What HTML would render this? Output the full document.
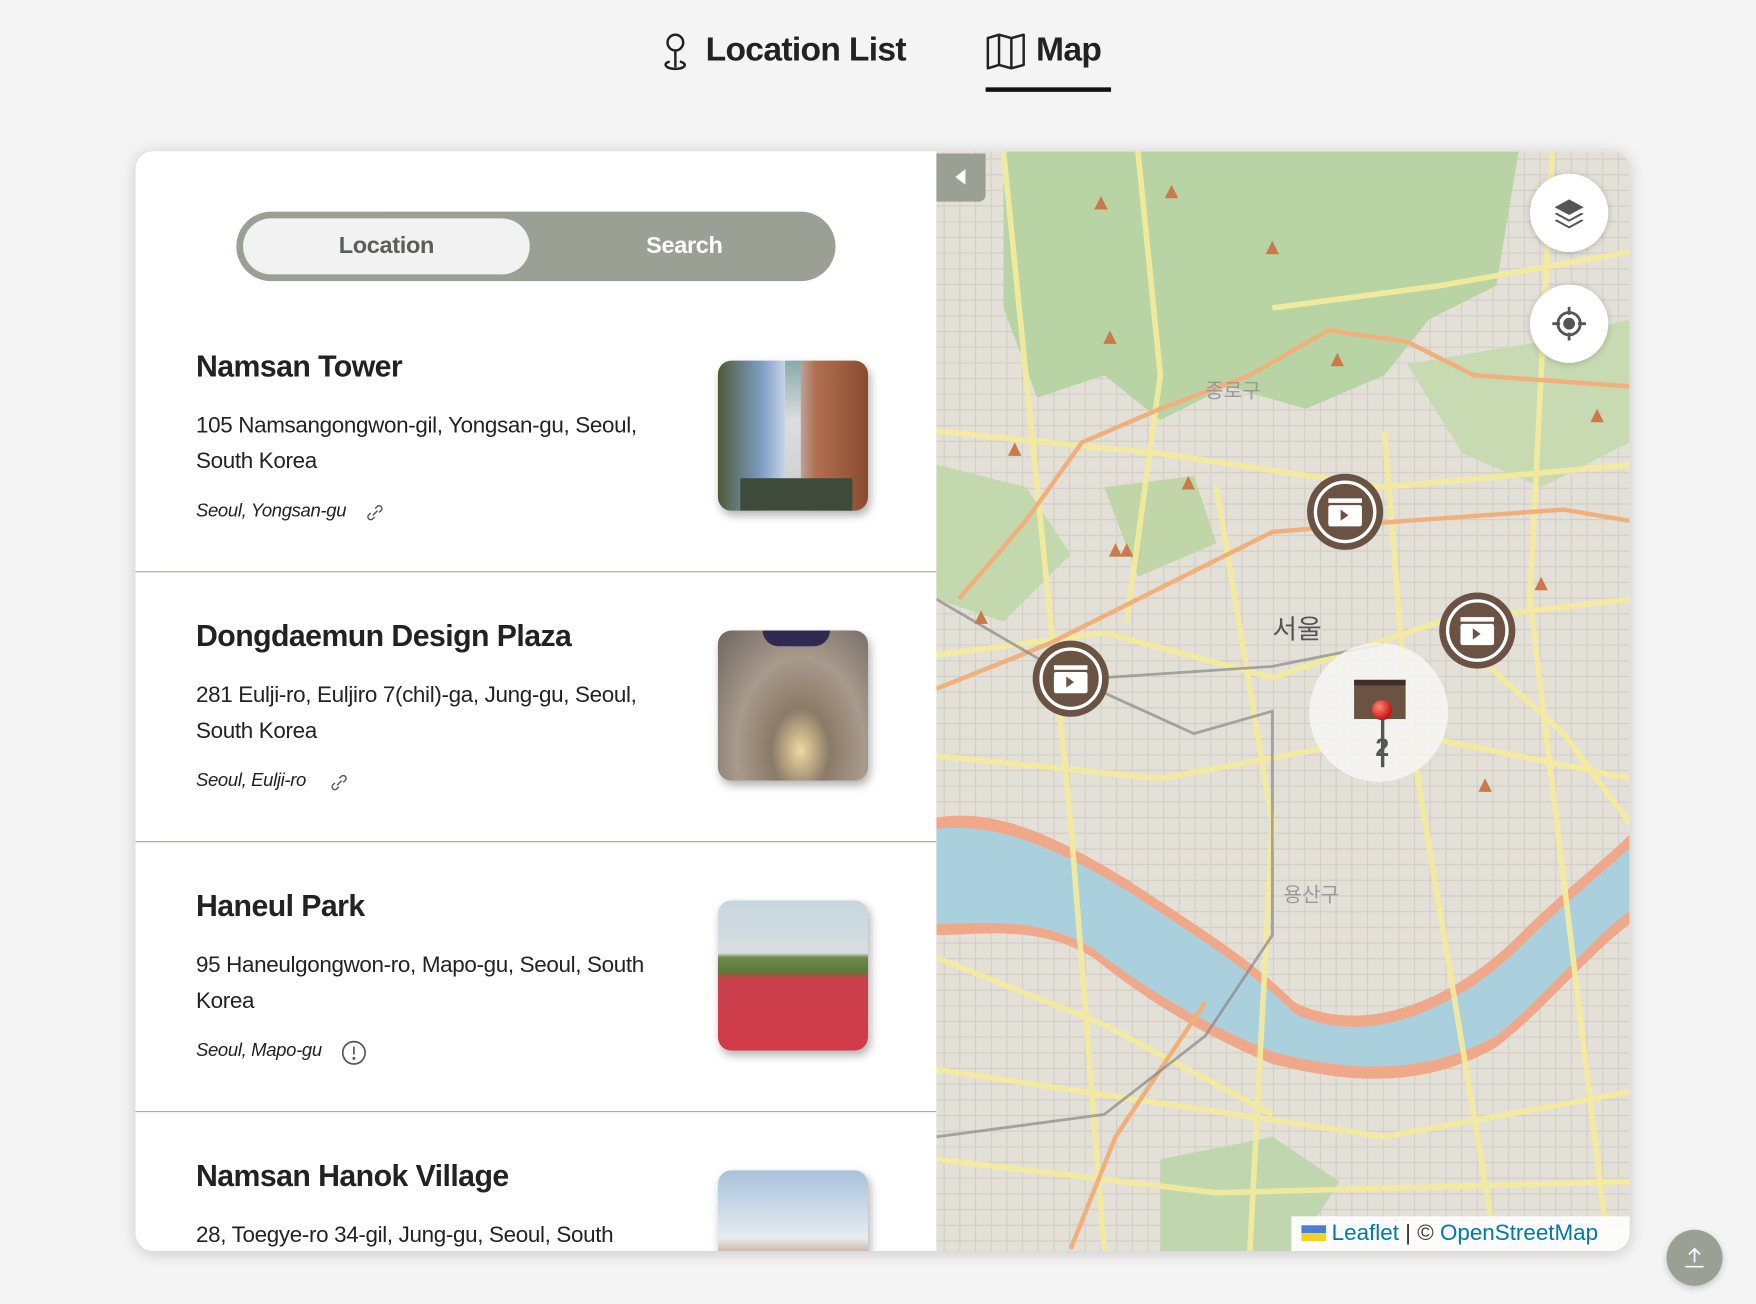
<!DOCTYPE html>
<html><head><meta charset="utf-8"><style>
html,body{margin:0;padding:0;width:1756px;height:1304px;overflow:hidden;background:#f4f4f4;}
#w{position:absolute;left:0;top:0;width:1568px;height:1164px;transform:scale(1.12);transform-origin:0 0;font-family:"Liberation Sans","Noto Sans CJK KR",sans-serif;color:#222;overflow:hidden;}
.abs{position:absolute;}
.tab{position:absolute;top:28px;font-size:30px;font-weight:bold;letter-spacing:-0.6px;color:#222;}
.card{position:absolute;left:121px;top:135px;width:1334px;height:982px;border-radius:16px;box-shadow:0 2px 14px rgba(0,0,0,.18);overflow:hidden;background:#fff;}
.left{position:absolute;left:0;top:0;width:715px;height:982px;background:#fff;}
.item{position:absolute;left:0;width:715px;height:240px;border-bottom:1.5px solid #a5a9a0;}
.t{position:absolute;left:54px;font-size:27px;font-weight:bold;letter-spacing:-0.5px;color:#222;}
.a{position:absolute;left:54px;width:440px;font-size:20px;line-height:32px;letter-spacing:-0.3px;color:#222;}
.m{position:absolute;left:54px;font-size:16.5px;font-style:italic;letter-spacing:-0.3px;color:#222;}
.th{position:absolute;left:520px;width:134px;height:134px;border-radius:12px;box-shadow:2px 4px 8px rgba(0,0,0,.3);overflow:hidden;}
.mk{position:absolute;width:68px;height:68px;border-radius:50%;background:#6b5344;}
.mk:before{content:"";position:absolute;left:6px;top:6px;width:50px;height:50px;border:3px solid #fff;border-radius:50%;}
.ctl{position:absolute;width:70px;height:70px;border-radius:50%;background:#fff;box-shadow:0 1px 6px rgba(0,0,0,.2);}
</style></head><body><div id="w">
<svg class="abs" style="left:590px;top:29px" width="26" height="36" viewBox="0 0 26 36" fill="none" stroke="#222" stroke-width="2.2"><circle cx="13" cy="9" r="7"/><line x1="13" y1="16" x2="13" y2="31"/><path d="M8 26c-4 1-5 3-2 5 3 2 11 2 14 0 3-2 1-4-3-5"/></svg>
<div class="tab" style="left:630px">Location List</div>
<svg class="abs" style="left:880px;top:29px" width="36" height="34" viewBox="0 0 36 34" fill="none" stroke="#222" stroke-width="2.2" stroke-linejoin="round"><path d="M2 5l10-3 11 3 11-3v27l-11 3-11-3-10 3z"/><line x1="12" y1="2" x2="12" y2="29"/><line x1="23" y1="5" x2="23" y2="32"/></svg>
<div class="tab" style="left:925px">Map</div>
<div class="abs" style="left:880px;top:78px;width:112px;height:4px;background:#111"></div>

<div class="card">
 <div class="left">
  <div class="abs" style="left:90px;top:54px;width:535px;height:62px;border-radius:31px;background:#9ba095"></div>
  <div class="abs" style="left:96px;top:60px;width:256px;height:50px;border-radius:25px;background:#f2f2f2"></div>
  <div class="abs" style="left:96px;top:73px;width:256px;text-align:center;font-size:21px;font-weight:bold;color:#5a5f55;letter-spacing:-0.3px">Location</div>
  <div class="abs" style="left:352px;top:73px;width:276px;text-align:center;font-size:21px;font-weight:bold;color:#fff;letter-spacing:-0.3px">Search</div>

  <div class="item" style="top:135px">
   <div class="t" style="top:42px">Namsan Tower</div>
   <div class="a" style="top:94px">105 Namsangongwon-gil, Yongsan-gu, Seoul, South Korea</div>
   <div class="m" style="top:177px">Seoul, Yongsan-gu</div>
   <svg class="abs" style="left:205px;top:179px" width="18" height="18" viewBox="0 0 18 18" fill="none" stroke="#555" stroke-width="1.3"><path d="M7 11l4-4M5 9l-2 2a2.5 2.5 0 003.5 3.5l2-2M9 5l2-2a2.5 2.5 0 013.5 3.5l-2 2"/></svg>
   <div class="th" style="top:52px;background:linear-gradient(90deg,#4f5a3a 0%,#7fa0c8 30%,#c9d6e5 45%,#b07050 65%,#8a4a30 100%)"><div class="abs" style="left:60px;top:0;width:14px;height:134px;background:linear-gradient(#8aa,#ddd 40%,#ccc)"></div><div class="abs" style="left:20px;top:105px;width:100px;height:29px;background:#3e4a3a"></div></div>
  </div>
  <div class="item" style="top:376px">
   <div class="t" style="top:42px">Dongdaemun Design Plaza</div>
   <div class="a" style="top:94px">281 Eulji-ro, Euljiro 7(chil)-ga, Jung-gu, Seoul, South Korea</div>
   <div class="m" style="top:177px">Seoul, Eulji-ro</div>
   <svg class="abs" style="left:173px;top:179px" width="18" height="18" viewBox="0 0 18 18" fill="none" stroke="#555" stroke-width="1.3"><path d="M7 11l4-4M5 9l-2 2a2.5 2.5 0 003.5 3.5l2-2M9 5l2-2a2.5 2.5 0 013.5 3.5l-2 2"/></svg>
   <div class="th" style="top:52px;background:radial-gradient(ellipse at 55% 80%,#f0d9a0 0%,#8a7a68 25%,#a89a8c 55%,#6d655f 100%)"><div class="abs" style="left:40px;top:0;width:60px;height:14px;background:#302a50;border-radius:0 0 30px 30px"></div></div>
  </div>
  <div class="item" style="top:617px">
   <div class="t" style="top:42px">Haneul Park</div>
   <div class="a" style="top:94px">95 Haneulgongwon-ro, Mapo-gu, Seoul, South Korea</div>
   <div class="m" style="top:177px">Seoul, Mapo-gu</div>
   <svg class="abs" style="left:183px;top:176px" width="24" height="24" viewBox="0 0 24 24" fill="none" stroke="#555" stroke-width="1.5"><circle cx="12" cy="12" r="10"/><line x1="12" y1="6.5" x2="12" y2="13.5"/><circle cx="12" cy="17" r=".6" fill="#555"/></svg>
   <div class="th" style="top:52px;background:linear-gradient(#c6d6df 0%,#d8dfe0 35%,#6c8a4a 38%,#5b7a3c 47%,#c8404c 52%,#d23a48 100%)"></div>
  </div>
  <div class="item" style="top:858px;border:none">
   <div class="t" style="top:42px">Namsan Hanok Village</div>
   <div class="a" style="top:94px;width:480px">28, Toegye-ro 34-gil, Jung-gu, Seoul, South</div>
   <div class="th" style="top:52px;background:linear-gradient(#a8c2dc 0%,#e6ecf0 45%,#b08050 65%,#2e3034 80%)"></div>
  </div>
 </div>

 <div class="abs" style="left:715px;top:0;width:619px;height:982px;background:#e9e6dc;overflow:hidden">
  <svg width="619" height="982" viewBox="0 0 619 982">
   <defs><pattern id="g" width="14" height="14" patternUnits="userSpaceOnUse"><path d="M0 7H14M7 0V14" stroke="#d2cec6" stroke-width="1"/></pattern></defs>
   <rect width="619" height="982" fill="#e3e0d8"/>
   <rect width="619" height="982" fill="url(#g)"/>
   <path d="M60 0H520L500 120 440 150 400 200 330 230 260 210 200 240 150 200 90 220 60 140Z" fill="#b9d4a4"/>
   <path d="M0 280 80 300 120 360 60 420 0 400Z" fill="#c3d8ac"/>
   <path d="M420 190 540 170 619 150V260L540 300 470 270Z" fill="#c8dab2"/>
   <path d="M150 300 230 290 250 350 180 380Z" fill="#c1d6a8"/>
   <path d="M0 595C60 585 120 620 170 650 230 690 280 720 320 760 380 790 460 760 520 700 560 660 600 630 619 610V690C580 720 540 770 500 800 430 840 360 830 300 815 240 790 190 760 140 720 90 690 40 700 0 700Z" fill="#f0a88a"/>
   <path d="M0 605C60 598 120 630 170 660 230 700 280 730 320 770 380 800 460 770 520 712 560 672 600 640 619 622V678C580 708 540 758 500 790 430 828 360 820 300 804 240 780 190 750 140 712 90 682 40 690 0 690Z" fill="#abd0dd"/>
   <path d="M200 900 300 880 360 920 320 982 200 982Z" fill="#c0d6ae"/>
   <g fill="none" stroke="#f5ec9c" stroke-width="5" opacity=".9">
    <path d="M0 450 150 430 300 470 450 420 619 400"/>
    <path d="M60 0 90 300 120 600 150 982"/>
    <path d="M250 300 300 600 280 982"/>
    <path d="M400 250 420 500 500 982"/>
    <path d="M0 820 200 850 400 880 619 840"/>
    <path d="M300 140 450 120 619 90"/>
    <path d="M0 250 200 270 400 300 619 280"/>
    <path d="M550 0 530 400 600 982"/>
    <path d="M0 540 200 560 420 520 619 560"/>
    <path d="M0 720 150 780 300 860"/>
    <path d="M180 0 200 200 170 420"/>
    <path d="M0 900 250 930 619 920"/>
    <path d="M460 430 560 520 619 600"/>
   </g>
   <g fill="none" stroke="#f0b07c" stroke-width="4">
    <path d="M0 480 100 440 200 390 300 340 420 330 560 320 619 330"/>
    <path d="M20 400 80 330 130 260 200 230 280 200 350 160 420 170 480 200 619 210"/>
    <path d="M120 980 160 880 240 760"/>
   </g>
   <g fill="none" stroke="#888" stroke-width="2.5" opacity=".7">
    <path d="M0 400 120 470 230 520 300 500 300 700 240 790 150 860 0 880"/>
    <path d="M150 470 300 460 400 440"/>
   </g>
   <g fill="#c87a4a"><path d="M147 40l6 12h-12z"/><path d="M210 30l6 12h-12z"/><path d="M300 80l6 12h-12z"/><path d="M155 160l6 12h-12z"/><path d="M358 180l6 12h-12z"/><path d="M590 230l6 12h-12z"/><path d="M70 260l6 12h-12z"/><path d="M225 290l6 12h-12z"/><path d="M160 350l6 12h-12z"/><path d="M40 410l6 12h-12z"/><path d="M540 380l6 12h-12z"/><path d="M490 560l6 12h-12z"/><path d="M170 350l6 12h-12z"/></g>
   <text x="300" y="435" font-size="24" fill="#555" font-family="Noto Sans CJK KR,sans-serif">서울</text>
   <text x="240" y="220" font-size="18" fill="#999" font-family="Noto Sans CJK KR,sans-serif">종로구</text>
   <text x="310" y="670" font-size="18" fill="#999" font-family="Noto Sans CJK KR,sans-serif">용산구</text>
  </svg>
  <div class="abs" style="left:0;top:2px;width:44px;height:43px;background:#9ba095;border-radius:0 0 6px 0"></div>
  <div class="abs" style="left:17px;top:16px;width:0;height:0;border-top:7px solid transparent;border-bottom:7px solid transparent;border-right:9px solid #fff"></div>
  <div class="ctl" style="left:530px;top:20px"><svg style="position:absolute;left:19px;top:19px" width="32" height="32" viewBox="0 0 32 32" fill="#555"><path d="M16 4 29 11 16 18 3 11Z"/><path d="M5 16 16 22 27 16 29 17 16 24 3 17Z"/><path d="M5 22 16 28 27 22 29 23 16 30 3 23Z"/></svg></div>
  <div class="ctl" style="left:530px;top:119px"><svg style="position:absolute;left:18px;top:18px" width="34" height="34" viewBox="0 0 34 34" fill="none" stroke="#555" stroke-width="2.5"><circle cx="17" cy="17" r="10"/><circle cx="17" cy="17" r="4" fill="#555"/><path d="M17 2v7M17 25v7M2 17h7M25 17h7"/></svg></div>
  <div class="mk" style="left:331px;top:288px"></div>
  <div class="mk" style="left:449px;top:394px"></div>
  <div class="mk" style="left:86px;top:437px"></div>
  <div class="abs" style="left:333px;top:439px;width:124px;height:124px;border-radius:50%;background:rgba(245,245,242,.88)"></div>
  <div class="abs" style="left:373px;top:472px;width:46px;height:30px;background:#6b5344;border-top:5px solid #3e3029"></div>
  <div class="abs" style="left:397px;top:505px;width:3px;height:45px;background:#555"></div>
  <div class="abs" style="left:389px;top:490px;width:18px;height:18px;border-radius:50%;background:radial-gradient(circle at 35% 35%,#ff8a7a,#d0201a 60%,#8a1010)"></div>
  <div class="abs" style="left:392px;top:520px;font-size:22px;font-weight:bold;color:#555">2</div>
  <div class="abs" style="left:317px;top:951px;width:302px;height:31px;background:rgba(255,255,255,.9);font-family:'Liberation Sans',sans-serif;font-size:20px;line-height:31px;color:#333;white-space:nowrap"><span style="display:inline-block;width:22px;height:14px;margin:0 5px 0 9px;vertical-align:-1px;background:linear-gradient(#4a7fd6 50%,#f5d020 50%)"></span><span style="color:#0078a8">Leaflet</span> | © <span style="color:#0078a8">OpenStreetMap</span></div>
 </div>
</div>
<svg class="abs" style="left:0;top:0" width="1568" height="1164">
 <g fill="#fff"><rect x="1186" y="451" width="30" height="19" rx="2"/><rect x="1304" y="557" width="30" height="19" rx="2"/><rect x="941" y="600" width="30" height="19" rx="2"/>
 <rect x="1186" y="445" width="30" height="4"/><rect x="1304" y="551" width="30" height="4"/><rect x="941" y="594" width="30" height="4"/></g>
 <g fill="#6b5344"><path d="M1197 455v10l7-5z"/><path d="M1315 561v10l7-5z"/><path d="M952 604v10l7-5z"/></g>
</svg>
<div class="abs" style="left:1488px;top:1098px;width:50px;height:50px;border-radius:50%;background:#9ba095;box-shadow:0 2px 6px rgba(0,0,0,.2)"><svg style="position:absolute;left:15px;top:14px" width="20" height="22" viewBox="0 0 20 22" fill="none" stroke="#fff" stroke-width="1.5"><path d="M10 15V3M5 8l5-5 5 5M2 19h16"/></svg></div>
</div></body></html>
